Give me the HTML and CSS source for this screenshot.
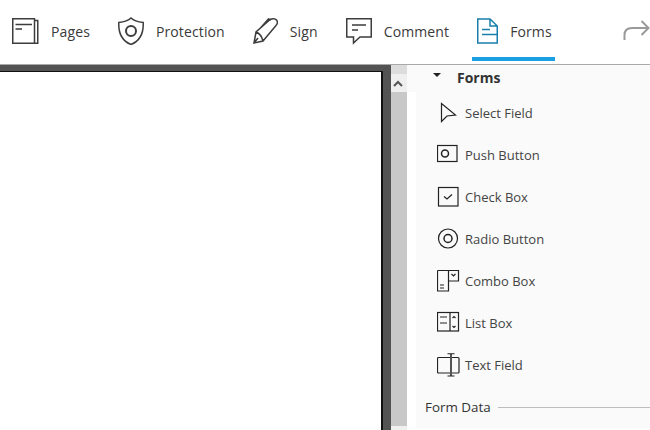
FILE: index.html
```html
<!DOCTYPE html>
<html lang="en">
<head>
<meta charset="utf-8">
<title>Forms</title>
<link rel="stylesheet" href="styles.css">
</head>
<body>
<header class="toolbar">
  <div class="tab"><svg width="27" height="28" viewBox="0 0 27 28"><path d="M.75 1.750H22.500V26.250H.75ZM22.500 3.500H25.750V26.250H22.500M3.500 7.500H20M3.500 12H10" /></svg><span>Pages</span></div>
  <div class="tab"><svg width="26" height="28" viewBox="0 0 26 28"><path d="M13 1C10 4 5.500 5 .8 5.500C.4 14 2 23 13 27.500C24 23 25.600 14 25.200 5.500C20.500 5 16 4 13 1Z" /><circle cx="13" cy="14" r="5" stroke-width="2" /></svg><span>Protection</span></div>
  <div class="tab"><svg width="25" height="28" viewBox="0 0 25 28"><path d="M1 26L3 15L16 3.500C18 1.500 22 1 23.500 3C25 5 24.500 7 23 8.500L10 24ZM1 26L5 21M3 15C6 16 9 20 10 24M7 11.500L15.500 2L18 3" /></svg><span>Sign</span></div>
  <div class="tab"><svg width="26" height="28" viewBox="0 0 26 28"><path d="M.75 1.750H25.250V20H14L7.500 26V20H.75ZM6 8H20M6 13H12" /></svg><span>Comment</span></div>
  <div class="tab tab-active"><svg class="ticon-blue" width="21" height="28" viewBox="0 0 21 28"><path d="M.75 2H13L20.250 9V26H.75ZM13 2V9H20.250M5 12.500H13M5 17.500H20" /></svg><span>Forms</span></div>
  <svg class="redo" width="27" height="24" viewBox="0 0 27 24"><path d="M1.500 21V16C1.500 11 4 9 9 9H25M18.500 2L25.500 9L18.500 16" /></svg>
</header>
<main class="workspace">
  <section class="canvas"><div class="page"></div></section>
  <div class="scrollbar">
    <div class="scroll-cap"></div>
    <div class="scroll-up"><svg width="10" height="7" viewBox="0 0 10 7"><path d="M1 6L5 2L9 6" /></svg></div>
    <div class="scroll-thumb"></div>
  </div>
  <aside class="panel">
    <div class="panel-head"><span class="caret"></span><span>Forms</span></div>
    <ul class="fields">
      <li><svg class="ficon" width="24" height="24" viewBox="0 0 24 24"><path d="M4.500 2.500V20.500L10 15L18.500 14Z" /></svg>Select Field</li>
      <li><svg class="ficon" width="24" height="24" viewBox="0 0 24 24"><rect x=".5" y="2.500" width="19.500" height="16" /><circle cx="8" cy="10.500" r="3.500" stroke-width="1.500" /></svg>Push Button</li>
      <li><svg class="ficon" width="24" height="24" viewBox="0 0 24 24"><rect x="1.500" y="2.500" width="19.500" height="18.500" /><path d="M7 11.500L10 14L15 9.500" /></svg>Check Box</li>
      <li><svg class="ficon" width="24" height="24" viewBox="0 0 24 24"><circle cx="11" cy="11.500" r="9.500" /><circle cx="11" cy="11.500" r="4" stroke-width="1.500" /></svg>Radio Button</li>
      <li><svg class="ficon" width="24" height="24" viewBox="0 0 24 24"><path d="M.5 1.500H21.500V12H11.500M.5 1.500V22H11.500V1.500M3 16H7M3 19H7M14.500 5L16.500 7L18.500 5" /></svg>Combo Box</li>
      <li><svg class="ficon" width="24" height="24" viewBox="0 0 24 24"><rect x=".5" y="1.500" width="21" height="18.500" /><path d="M13 1.500V20M3 6H10M3 12H10M15.500 7L17 5.500L18.500 7M15.500 15L17 16.500L18.500 15" /></svg>List Box</li>
      <li><svg class="ficon" width="24" height="24" viewBox="0 0 24 24"><rect x=".5" y="4.500" width="21.500" height="15.500" rx="1" /><path class="ibeam" d="M14 1V23" /><path d="M10.500 .75H17.500M10.500 23H17.500" /></svg>Text Field</li>
    </ul>
    <div class="section-label"><span>Form Data</span><span class="rule"></span></div>
  </aside>
</main>
</body>
</html>
```
FILE: styles.css
```css
* { box-sizing: border-box; }
html, body { margin: 0; padding: 0; }
body {
  width: 650px;
  height: 430px;
  overflow: hidden;
  background: #fff;
  font-family: "Open Sans", "Liberation Sans", sans-serif;
  font-size: 14px;
  color: #3a3a3a;
}
svg { display: block; flex: none; fill: none; stroke: #3d3d3d; stroke-width: 1.5; }
.toolbar {
  display: flex;
  align-items: center;
  height: 65px;
  padding-left: 12px;
  gap: 28px;
  background: #fff;
  border-bottom: 1px solid #a9a9a9;
}
.tab {
  position: relative;
  display: flex;
  align-items: center;
  gap: 12px;
  height: 64px;
  padding-bottom: 2px;
  letter-spacing: .12px;
}
.tab-active { margin-left: -5px; padding: 0 3px 2px 5px; }
.tab-active::after {
  content: "";
  position: absolute;
  left: 0;
  right: 0;
  bottom: 3px;
  height: 4px;
  background: #1b9fe3;
}
.ticon-blue { stroke: #1a7fae; }
.redo { margin-left: 40px; margin-bottom: 2px; stroke: #9a9a9a; stroke-width: 2; }
.workspace { display: flex; height: 365px; }
.canvas {
  width: 391px;
  padding: 6px 8px 0 0;
  background: #535353;
}
.page {
  height: 100%;
  background: #fff;
  border-top: 1px solid #111;
  border-right: 2px solid #111;
}
.scrollbar {
  display: flex;
  flex-direction: column;
  width: 16px;
  background: #f0f0f0;
}
.scroll-cap { height: 9px; background: #dcdcdc; }
.scroll-up { display: flex; align-items: center; justify-content: center; height: 18px; padding-right: 2px; background: #efefef; }
.scroll-up svg { stroke: #555; stroke-width: 2; }
.scroll-thumb { height: 334px; background: #c8c8c8; }
.panel { flex: 1; background: #fff; }
.panel-head {
  display: flex;
  align-items: center;
  gap: 16px;
  height: 27px;
  padding: 0 0 2px 26px;
  font-weight: 700;
  color: #333;
  background: #fafafa;
}
.caret {
  width: 0;
  height: 0;
  margin-bottom: 5px;
  border-left: 4px solid transparent;
  border-right: 4px solid transparent;
  border-top: 4px solid #222;
}
.fields { margin: 0 0 0 9px; padding: 0 0 0 21px; list-style: none; background: #fafafa; }
.fields li {
  display: flex;
  align-items: center;
  gap: 4px;
  height: 42px;
  font-size: 13px;
  color: #444;
}
.ficon { stroke-width: 1.200; stroke: #222; }
.ibeam { stroke: #555; stroke-width: 2; }
.section-label {
  display: flex;
  align-items: center;
  gap: 7px;
  height: 42px;
  margin-left: 9px;
  padding-left: 9px;
  font-size: 13.400px;
  color: #333;
  background: #fafafa;
}
.rule { flex: 1; height: 1px; background: #bdbdbd; }
```
